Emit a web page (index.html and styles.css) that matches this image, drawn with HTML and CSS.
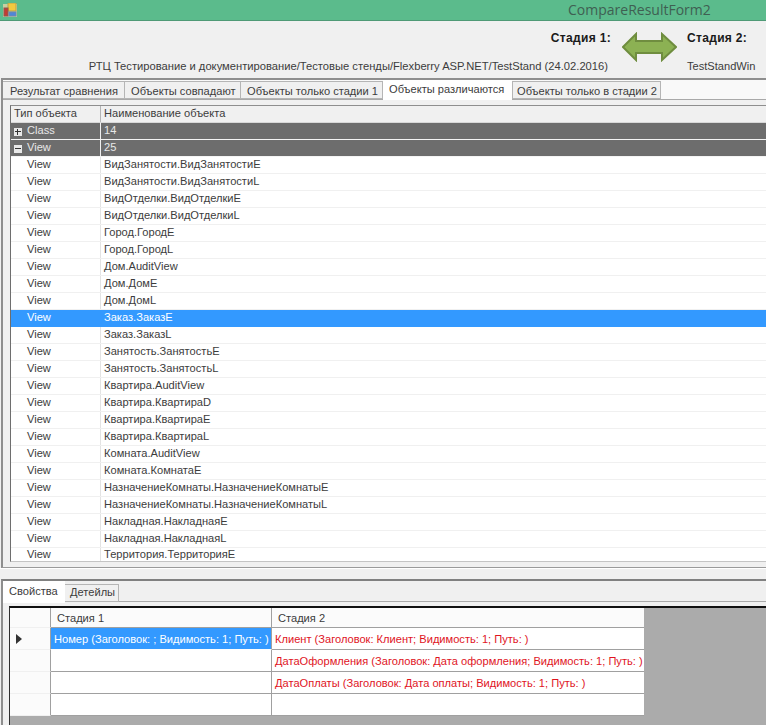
FILE: index.html
```html
<!DOCTYPE html>
<html lang="ru">
<head>
<meta charset="utf-8">
<title>CompareResultForm2</title>
<link rel="stylesheet" href="styles.css">
</head>
<body>
<div class="window">
  <header class="titlebar">
    <svg class="app-icon" width="14" height="14" viewBox="0 0 14 14"><rect x="0" y="1" width="14" height="13" fill="#c9cfa0"/><rect x="5" y="0" width="8" height="8" fill="#f2c940" stroke="#b9a24a"/><rect x="1" y="5" width="4" height="8" fill="#c43a32" stroke="#8a5a50"/><rect x="6" y="9" width="7" height="4" fill="#4f86d8" stroke="#6d88b0"/></svg>
    <span class="title">CompareResultForm2</span>
  </header>
  <section class="stages">
    <div class="stage stage-one">
      <strong>Стадия 1:</strong>
      <span>РТЦ Тестирование и документирование/Тестовые стенды/Flexberry ASP.NET/TestStand (24.02.2016)</span>
    </div>
    <svg class="arrow" width="55" height="30" viewBox="0 0 55 30"><polygon points="1,15 14,2 14,9 40,9 40,2 54,15 40,28 40,21 14,21 14,28" fill="#8cb153" stroke="#6f8d3f" stroke-width="2"/></svg>
    <div class="stage stage-two">
      <strong>Стадия 2:</strong>
      <span>TestStandWin</span>
    </div>
  </section>
  <section class="upper">
    <nav class="tabs">
      <span class="tab tab-a">Результат сравнения</span>
      <span class="tab tab-b">Объекты совпадают</span>
      <span class="tab tab-c">Объекты только стадии 1</span>
      <span class="tab tab-active">Объекты различаются</span>
      <span class="tab tab-e">Объекты только в стадии 2</span>
    </nav>
    <div class="page">
      <div class="tree">
        <div class="row head"><span class="c1">Тип объекта</span><span class="c2">Наименование объекта</span></div>
        <div class="row group"><span class="c1"><i class="box plus"></i>Class</span><span class="c2">14</span></div>
        <div class="row group"><span class="c1"><i class="box minus"></i>View</span><span class="c2">25</span></div>
        <div class="row"><span class="c1">View</span><span class="c2">ВидЗанятости.ВидЗанятостиE</span></div>
        <div class="row"><span class="c1">View</span><span class="c2">ВидЗанятости.ВидЗанятостиL</span></div>
        <div class="row"><span class="c1">View</span><span class="c2">ВидОтделки.ВидОтделкиE</span></div>
        <div class="row"><span class="c1">View</span><span class="c2">ВидОтделки.ВидОтделкиL</span></div>
        <div class="row"><span class="c1">View</span><span class="c2">Город.ГородE</span></div>
        <div class="row"><span class="c1">View</span><span class="c2">Город.ГородL</span></div>
        <div class="row"><span class="c1">View</span><span class="c2">Дом.AuditView</span></div>
        <div class="row"><span class="c1">View</span><span class="c2">Дом.ДомE</span></div>
        <div class="row"><span class="c1">View</span><span class="c2">Дом.ДомL</span></div>
        <div class="row selected"><span class="c1">View</span><span class="c2">Заказ.ЗаказE</span></div>
        <div class="row"><span class="c1">View</span><span class="c2">Заказ.ЗаказL</span></div>
        <div class="row"><span class="c1">View</span><span class="c2">Занятость.ЗанятостьE</span></div>
        <div class="row"><span class="c1">View</span><span class="c2">Занятость.ЗанятостьL</span></div>
        <div class="row"><span class="c1">View</span><span class="c2">Квартира.AuditView</span></div>
        <div class="row"><span class="c1">View</span><span class="c2">Квартира.КвартираD</span></div>
        <div class="row"><span class="c1">View</span><span class="c2">Квартира.КвартираE</span></div>
        <div class="row"><span class="c1">View</span><span class="c2">Квартира.КвартираL</span></div>
        <div class="row"><span class="c1">View</span><span class="c2">Комната.AuditView</span></div>
        <div class="row"><span class="c1">View</span><span class="c2">Комната.КомнатаE</span></div>
        <div class="row"><span class="c1">View</span><span class="c2">НазначениеКомнаты.НазначениеКомнатыE</span></div>
        <div class="row"><span class="c1">View</span><span class="c2">НазначениеКомнаты.НазначениеКомнатыL</span></div>
        <div class="row"><span class="c1">View</span><span class="c2">Накладная.НакладнаяE</span></div>
        <div class="row"><span class="c1">View</span><span class="c2">Накладная.НакладнаяL</span></div>
        <div class="row row-last"><span class="c1">View</span><span class="c2">Территория.ТерриторияE</span></div>
      </div>
    </div>
  </section>
  <div class="splitter"></div>
  <section class="lower">
    <nav class="subtabs">
      <span class="subtab subtab-active">Свойства</span>
      <span class="subtab subtab-other">Детейлы</span>
    </nav>
    <div class="props">
      <div class="props-table">
        <div class="prow phead"><span class="pmark"></span><span class="p1">Стадия 1</span><span class="p2">Стадия 2</span></div>
        <div class="prow"><span class="pmark"><i class="current"></i></span><span class="p1 pselected">Номер (Заголовок: ; Видимость: 1; Путь: )</span><span class="p2 changed">Клиент (Заголовок: Клиент; Видимость: 1; Путь: )</span></div>
        <div class="prow"><span class="pmark"></span><span class="p1"></span><span class="p2 changed">ДатаОформления (Заголовок: Дата оформления; Видимость: 1; Путь: )</span></div>
        <div class="prow"><span class="pmark"></span><span class="p1"></span><span class="p2 changed">ДатаОплаты (Заголовок: Дата оплаты; Видимость: 1; Путь: )</span></div>
        <div class="prow"><span class="pmark"></span><span class="p1"></span><span class="p2"></span></div>
      </div>
    </div>
  </section>
</div>
</body>
</html>
```
FILE: styles.css
```css
* { box-sizing: border-box; }
html, body { margin: 0; padding: 0; }
body {
  width: 766px;
  height: 725px;
  overflow: hidden;
  background: #f0f0f0;
  color: #3c3c3c;
  font: 11.1px/17px "Liberation Sans", Arial, sans-serif;
}
.window { display: flex; flex-direction: column; height: 725px; overflow: hidden; }

.titlebar {
  height: 21px;
  flex: none;
  display: flex;
  align-items: center;
  background: #5bbb8c;
  border-bottom: 1px solid #4e9a76;
  padding: 0 0 0 3px;
}
.app-icon { flex: none; }
.title {
  margin-left: 551px;
  font: 14px/20px "Open Sans", sans-serif;
  color: #3f5f52;
}

.stages {
  height: 57px;
  flex: none;
  display: flex;
  align-items: flex-start;
  padding: 9px 0 0 0;
  background: #f0f0f0;
}
.stage { display: flex; flex-direction: column; gap: 11px; }
.stage strong { font-size: 12px; font-weight: 700; color: #1a1a1a; letter-spacing: .33px; }
.stage-one { width: 611px; align-items: flex-end; }
.stage-one span { margin-right: 3px; white-space: nowrap; font-size: 11.2px; }
.arrow { flex: none; margin: 2px 0 0 11px; }
.stage-two { margin-left: 10px; }

.upper {
  height: 490px;
  flex: none;
  display: flex;
  flex-direction: column;
  border-top: 2px solid #8e8e8e;
  border-left: 2px solid #8e8e8e;
  border-bottom: 1px solid #9a9a9a;
  margin-left: 1px;
}
.tabs {
  height: 20px;
  flex: none;
  display: flex;
  align-items: flex-start;
  background: #f9f9f9;
  border-bottom: 1px solid #a9a9a9;
  padding-top: 1px;
}
.tab {
  height: 18px;
  background: #f0f0f0;
  border: 1px solid #b5b5b5;
  border-left: 0;
  padding: 1px 0 0 7px;
  line-height: 16px;
  white-space: nowrap;
}
.tab-a { width: 122px; }
.tab-b { width: 116px; padding-left: 6px; }
.tab-c { width: 142px; padding-left: 6px; }
.tab-active {
  width: 129px;
  height: 20px;
  margin-top: -1px;
  background: #fff;
  border: 0;
  padding-left: 6px;
  position: relative;
  z-index: 1;
}
.tab-e { width: 149px; padding-left: 4px; border-left: 1px solid #b5b5b5; }

.page {
  flex: 1;
  min-height: 0;
  padding: 5px 0 5px 7px;
  overflow: hidden;
  background: #f0f0f0;
}
.tree {
  height: 100%;
  overflow: hidden;
  background: #fff;
  border-top: 1px solid #8e8e8e;
  border-left: 1px solid #6e6e6e;
  border-bottom: 1px solid #c4c4c4;
}
.row {
  display: flex;
  height: 17px;
  background: #fff;
  border-bottom: 1px solid #f0f0f0;
  line-height: 14px;
}
.row-last { height: 13px; border-bottom: 0; line-height: 13px; }
.c1 { width: 90px; flex: none; padding-left: 16px; border-right: 1px solid #e3e3e3; white-space: nowrap; }
.c2 { flex: 1; padding-left: 3px; white-space: nowrap; }
.head { background: #f0f0f0; border-bottom: 1px solid #d8d8d8; }
.head .c1 { padding-left: 3px; border-right-color: #b4b4b4; }
.group { background: #6d6d6d; color: #e8e8e8; border-bottom: 1px solid #f4f4f4; }
.group .c1 { padding-left: 3px; border-right-color: #f0f0f0; display: flex; align-items: flex-start; gap: 5px; }
.selected { background: #3399ff; color: #fff; border-bottom-color: #3399ff; }
.selected .c1 { border-right-color: #3399ff; }
.box {
  width: 8px;
  height: 8px;
  background: #e8e8e8;
  display: block;
  position: relative;
  margin-top: 5px;
}
.box::before {
  content: "";
  position: absolute;
  left: 1px;
  top: 3px;
  width: 6px;
  height: 1px;
  background: #333;
}
.plus::after {
  content: "";
  position: absolute;
  left: 3px;
  top: 1px;
  width: 1px;
  height: 6px;
  background: #333;
}

.splitter { height: 11px; flex: none; background: #f0f0f0; border-top: 1px solid #fff; }

.lower {
  flex: 1;
  min-height: 0;
  display: flex;
  flex-direction: column;
  border-top: 2px solid #808080;
  border-left: 2px solid #8e8e8e;
  margin-left: 1px;
}
.subtabs {
  height: 21px;
  flex: none;
  display: flex;
  align-items: flex-start;
  background: #f0f0f0;
  border-bottom: 1px solid #a9a9a9;
}
.subtab { white-space: nowrap; }
.subtab-active { width: 62px; height: 22px; background: #fff; padding: 2px 0 0 6px; position: relative; z-index: 1; }
.subtab-other {
  width: 54px;
  height: 18px;
  margin-top: 3px;
  background: #f0f0f0;
  border: 1px solid #b5b5b5;
  border-left: 0;
  padding-left: 5px;
  line-height: 15px;
}
.props {
  flex: 1;
  min-height: 0;
  padding: 4px 0 0 6px;
  background: #f0f0f0;
}
.props-table {
  height: 100%;
  background: #ababab;
  border-top: 2px solid #101010;
  border-left: 1px solid #303030;
}
.prow { display: flex; width: 634px; height: 22px; background: #fff; line-height: 20px; }
.pmark {
  width: 41px;
  flex: none;
  background: #fbfbfb;
  border-right: 1px solid #a0a0a0;
  border-bottom: 1px solid #f0f0f0;
  display: flex;
  align-items: center;
  padding-left: 6px;
}
.p1 {
  width: 221px;
  flex: none;
  padding: 1px 0 0 3px;
  border-right: 1px solid #a0a0a0;
  border-bottom: 1px solid #a0a0a0;
  white-space: nowrap;
}
.p2 { flex: 1; padding: 1px 0 0 3px; border-bottom: 1px solid #a0a0a0; white-space: nowrap; }
.phead { height: 20px; background: #fbfbfb; line-height: 18px; }
.phead .p1, .phead .p2 { padding-left: 6px; background: #fbfbfb; border-bottom-color: #a0a0a0; }
.pselected { background: #3399ff; color: #fff; border-bottom-color: #fff; }
.changed { color: #e0141e; }
.current {
  display: block;
  width: 0;
  height: 0;
  border-left: 6px solid #333;
  border-top: 5px solid transparent;
  border-bottom: 5px solid transparent;
}
```
